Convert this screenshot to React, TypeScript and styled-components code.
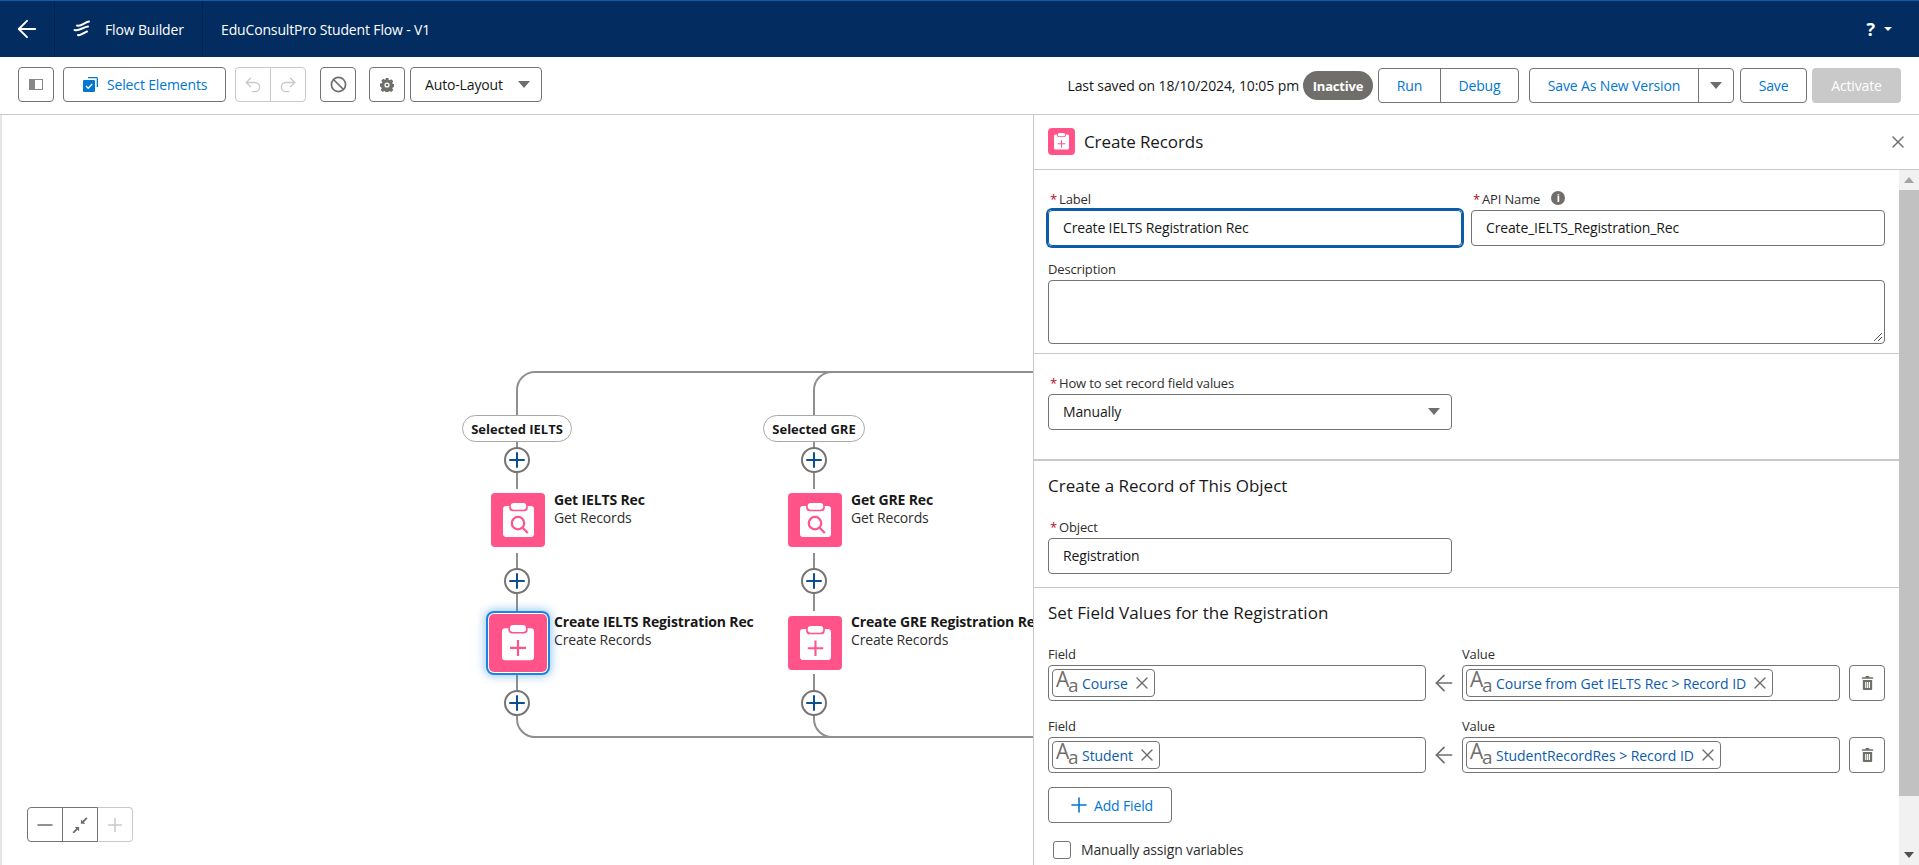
import React from "react";
import styled, { createGlobalStyle } from "styled-components";
import { ArrowLeft, Undo2, Redo2, Ban, X, Plus, Minus } from "lucide-react";

const GlobalStyle = createGlobalStyle`
  html, body { margin: 0; padding: 0; height: 100%; overflow: hidden; }
  body {
    font-family: "Open Sans", "Liberation Sans", sans-serif;
    font-size: 14px;
    letter-spacing: -0.15px;
    color: #181818;
    background: #fff;
  }
  * { box-sizing: border-box; }
`;

const BLUE = "#0b5cab";
const LINK = "#0176d3";
const BORDER = "#747474";
const PINK = "#ff538a";

const Page = styled.div`
  width: 1919px;
  height: 865px;
  display: flex;
  flex-direction: column;
  overflow: hidden;
`;

/* header */
const Header = styled.header`
  height: 57px;
  flex: none;
  display: flex;
  align-items: stretch;
  background: #032d60;
  border-top: 1px solid ${BLUE};
  color: #fff;
`;
const BackCell = styled.div`
  width: 55px;
  display: flex;
  align-items: center;
  justify-content: center;
  padding-right: 1px;
  border-right: 1px solid #02234b;
`;
const BrandCell = styled.div`
  width: 148px;
  display: flex;
  align-items: center;
  gap: 14px;
  padding-left: 18px;
  border-right: 1px solid #02234b;
`;
const FlowTitle = styled.div`
  display: flex;
  align-items: center;
  padding-left: 18px;
  flex: 1;
`;
const HelpArea = styled.div`
  display: flex;
  align-items: center;
  gap: 9px;
  padding-right: 27px;
  font-size: 18px;
  font-weight: 700;
`;
const HelpCaret = styled.span`
  width: 0;
  height: 0;
  border-left: 4px solid transparent;
  border-right: 4px solid transparent;
  border-top: 4px solid #fff;
`;

/* toolbar */
const Toolbar = styled.div`
  height: 58px;
  flex: none;
  display: flex;
  align-items: center;
  padding: 0 18px 2px;
  border-bottom: 1px solid #c9c9c9;
  background: #fff;
`;
const ActionGroup = styled.div`
  display: flex;
  align-items: center;
  margin-top: 2px;
`;
const IconButton = styled.div<{ $left?: number }>`
  width: 36px;
  height: 35px;
  margin-left: ${(p) => p.$left ?? 0}px;
  border: 1px solid ${BORDER};
  border-radius: 4px;
  display: flex;
  align-items: center;
  justify-content: center;
  color: #706e6b;
`;
const SelectButton = styled.div`
  width: 163px;
  height: 35px;
  margin: 0 0 1px 9px;
  padding-left: 19px;
  gap: 9px;
  border: 1px solid ${BORDER};
  border-radius: 4px;
  display: flex;
  align-items: center;
  color: ${LINK};
`;
const UndoGroup = styled.div`
  display: flex;
  width: 71px;
  height: 35px;
  margin-left: 9px;
  border: 1px solid #c9c9c9;
  border-radius: 4px;
  color: #c9c9c9;
`;
const UndoCell = styled.div`
  flex: 1;
  display: flex;
  align-items: center;
  justify-content: center;
  & + & { border-left: 1px solid #c9c9c9; }
`;
const LayoutSelect = styled.div`
  width: 132px;
  height: 35px;
  margin: 0 0 1px 5px;
  padding: 0 11px 0 14px;
  border: 1px solid ${BORDER};
  border-radius: 4px;
  display: flex;
  align-items: center;
  justify-content: space-between;
`;
const Caret = styled.span`
  width: 0;
  height: 0;
  border-left: 6px solid transparent;
  border-right: 6px solid transparent;
  border-top: 7px solid #706e6b;
`;
const Spacer = styled.div`
  flex: 1;
`;
const SavedText = styled.span`
  letter-spacing: -0.1px;
  margin-right: 4px;
`;
const StatusPill = styled.span`
  width: 70px;
  height: 29px;
  border-radius: 15px;
  background: #706e6b;
  color: #fff;
  font-size: 13px;
  font-weight: 700;
  letter-spacing: -0.2px;
  display: flex;
  align-items: center;
  justify-content: center;
`;
const ButtonGroup = styled.div<{ $left: number }>`
  display: flex;
  height: 35px;
  margin-left: ${(p) => p.$left}px;
  border: 1px solid ${BORDER};
  border-radius: 4px;
  color: ${LINK};
`;
const GroupCell = styled.div<{ $width: number }>`
  width: ${(p) => p.$width}px;
  display: flex;
  align-items: center;
  justify-content: center;
  & + & { border-left: 1px solid ${BORDER}; }
`;
const ActivateButton = styled.div`
  width: 89px;
  height: 35px;
  margin-left: 5px;
  border-radius: 4px;
  background: #c9c9c9;
  color: #fff;
  display: flex;
  align-items: center;
  justify-content: center;
`;

/* body */
const Body = styled.div`
  flex: 1;
  min-height: 0;
  display: flex;
`;
const Canvas = styled.main`
  position: relative;
  flex: 1;
  overflow: hidden;
  border-left: 2px solid #e5e5e5;
`;
const Wires = styled.svg`
  position: absolute;
  left: -2px;
  top: 0;
  width: 1034px;
  height: 750px;
`;
const BranchPill = styled.div<{ $x: number; $y: number; $w: number }>`
  position: absolute;
  left: ${(p) => p.$x}px;
  top: ${(p) => p.$y}px;
  width: ${(p) => p.$w}px;
  height: 27px;
  border: 1px solid #a8a8a8;
  border-radius: 14px;
  background: #fff;
  display: flex;
  align-items: center;
  justify-content: center;
  font-size: 13px;
  font-weight: 700;
  letter-spacing: 0;
`;
const AddCircle = styled.div<{ $x: number; $y: number }>`
  position: absolute;
  left: ${(p) => p.$x}px;
  top: ${(p) => p.$y}px;
  width: 26px;
  height: 26px;
  border: 2px solid #747474;
  border-radius: 50%;
  background: #fff;
  color: #0b4f8f;
  display: flex;
  align-items: center;
  justify-content: center;
  & > svg { flex: none; }
`;
const FlowNode = styled.div<{ $x: number; $y: number }>`
  position: absolute;
  left: ${(p) => p.$x}px;
  top: ${(p) => p.$y}px;
  display: flex;
  gap: 9px;
  white-space: nowrap;
`;
const NodeIcon = styled.div<{ $selected?: boolean }>`
  width: 54px;
  height: 54px;
  flex: none;
  border-radius: 4px;
  background: ${PINK};
  display: flex;
  align-items: center;
  justify-content: center;
  ${(p) =>
    p.$selected &&
    `width: 58px;
     height: 58px;
     margin: -2px;
     border-radius: 5px;
     box-shadow: 0 0 0 1px #fff, 0 0 0 3px #1b84e0, 0 0 8px 5px rgba(27,132,224,.4);`}
`;
const NodeText = styled.div<{ $top: number }>`
  margin-top: ${(p) => p.$top}px;
  line-height: 18px;
`;
const NodeTitle = styled.div`
  font-weight: 700;
`;
const NodeSub = styled.div`
  color: #2e2e2e;
`;
const ZoomControl = styled.div`
  position: absolute;
  left: 25px;
  bottom: 23px;
  display: flex;
  height: 35px;
`;
const ZoomCell = styled.div<{ $off?: boolean }>`
  width: 36px;
  display: flex;
  align-items: center;
  justify-content: center;
  border: 1px solid ${(p) => (p.$off ? "#c9c9c9" : BORDER)};
  color: ${(p) => (p.$off ? "#c9c9c9" : "#706e6b")};
  & + & { margin-left: -1px; border-left-color: ${BORDER}; }
  &:first-child { border-radius: 4px 0 0 4px; }
  &:last-child { border-radius: 0 4px 4px 0; }
`;

/* panel */
const Panel = styled.aside`
  width: 886px;
  flex: none;
  display: flex;
  flex-direction: column;
  border-left: 1px solid #c9c9c9;
  background: #fff;
`;
const PanelHead = styled.div`
  height: 55px;
  flex: none;
  padding: 0 11px 1px 14px;
  display: flex;
  align-items: center;
  gap: 9px;
  border-bottom: 1px solid #c9c9c9;
`;
const PanelIcon = styled.div`
  width: 27px;
  height: 27px;
  border-radius: 4px;
  background: ${PINK};
  display: flex;
  align-items: center;
  justify-content: center;
`;
const PanelTitle = styled.div`
  flex: 1;
  font-size: 17px;
  letter-spacing: -0.1px;
`;
const PanelScroll = styled.div`
  flex: 1;
  min-height: 0;
  display: flex;
`;
const PanelContent = styled.div`
  flex: 1;
  overflow: hidden;
  min-width: 0;
`;
const Section = styled.section<{ $h: number; $thick?: boolean }>`
  display: flow-root;
  height: ${(p) => p.$h}px;
  padding: 0 14px;
  border-bottom: ${(p) => (p.$thick ? 2 : 1)}px solid #c9c9c9;
  &:last-child { border-bottom: 0; }
`;
const Row = styled.div<{ $top?: number; $gap?: number }>`
  display: flex;
  margin-top: ${(p) => p.$top ?? 0}px;
  gap: ${(p) => p.$gap ?? 0}px;
`;
const Field = styled.div<{ $w?: number }>`
  width: ${(p) => (p.$w ? `${p.$w}px` : "auto")};
  flex: ${(p) => (p.$w ? "none" : 1)};
  min-width: 0;
`;
const Label = styled.div`
  height: 17px;
  padding-bottom: 2px;
  display: flex;
  align-items: center;
  font-size: 13px;
  color: #2e2e2e;
  margin-bottom: 2px;
`;
const Req = styled.span`
  color: #ba0517;
  margin: 0 2px;
`;
const InfoDot = styled.span`
  display: inline-flex;
  width: 14px;
  height: 14px;
  margin: -2px 0 0 11px;
  border-radius: 50%;
  background: #706e6b;
  color: #fff;
  font-size: 10px;
  font-weight: 700;
  align-items: center;
  justify-content: center;
`;
const Input = styled.div<{ $focus?: boolean }>`
  height: 36px;
  padding: 0 14px 2px;
  display: flex;
  align-items: center;
  border: 1px solid ${BORDER};
  border-radius: 4px;
  white-space: nowrap;
  ${(p) => p.$focus && `border-color: ${BLUE}; box-shadow: 0 0 0 2px ${BLUE};`}
`;
const TextArea = styled.div`
  position: relative;
  height: 64px;
  border: 1px solid ${BORDER};
  border-radius: 4px;
`;
const Grip = styled.svg`
  position: absolute;
  right: 1px;
  bottom: 1px;
`;
const SelectBox = styled(Input)`
  justify-content: space-between;
  padding-right: 11px;
`;
const SectionHeading = styled.h3`
  margin: 0;
  font-size: 17px;
  font-weight: 400;
  letter-spacing: 0;
  line-height: 22px;
`;
const PillInput = styled.div`
  height: 36px;
  padding: 3px;
  border: 1px solid ${BORDER};
  border-radius: 4px;
  display: flex;
  align-items: flex-start;
`;
const Tag = styled.div`
  height: 28px;
  padding: 0 2px 0 3px;
  display: flex;
  align-items: center;
  border: 1px solid ${BORDER};
  border-radius: 4px;
  color: ${BLUE};
  letter-spacing: -0.05px;
  white-space: nowrap;
`;
const TypeGlyph = styled.span`
  position: relative;
  display: inline-block;
  flex: none;
  width: 24px;
  height: 26px;
  color: #706e6b;
  line-height: 1;
  & > span { position: absolute; }
  & > span:first-child { left: 0; top: -1px; font-size: 21px; }
  & > span:last-child { left: 12px; top: 6px; font-size: 19px; }
`;
const TagText = styled.span`
  margin: 0 4px 0 2px;
`;
const ArrowCell = styled.div`
  width: 36px;
  flex: none;
  padding-top: 19px;
  display: flex;
  align-items: center;
  justify-content: center;
  color: #706e6b;
`;
const TrashButton = styled(IconButton)`
  flex: none;
  margin: 19px 0 0 9px;
  height: 36px;
`;
const AddField = styled.div`
  width: 124px;
  height: 36px;
  margin-top: 14px;
  border: 1px solid ${BORDER};
  border-radius: 4px;
  display: flex;
  align-items: center;
  justify-content: center;
  gap: 3px;
  color: ${LINK};
`;
const CheckRow = styled.div`
  display: flex;
  align-items: center;
  gap: 10px;
  margin: 17px 0 0 5px;
  color: #2e2e2e;
`;
const CheckBox = styled.span`
  width: 18px;
  height: 18px;
  border: 1px solid ${BORDER};
  border-radius: 3px;
`;
const ScrollBar = styled.div`
  width: 20px;
  flex: none;
  display: flex;
  flex-direction: column;
  align-items: center;
  background: #f1f1f1;
`;
const ScrollArrow = styled.span<{ $up?: boolean }>`
  flex: none;
  height: 20px;
  display: flex;
  align-items: center;
  &::after {
    content: "";
    border-left: 5px solid transparent;
    border-right: 5px solid transparent;
    ${(p) => (p.$up ? "border-bottom" : "border-top")}: 6px solid ${(p) => (p.$up ? "#a3a3a3" : "#505050")};
  }
`;
const ScrollThumb = styled.div`
  width: 100%;
  height: 606px;
  background: #c1c1c1;
  margin-bottom: 49px;
`;

const BrandIcon = () => (
  <svg width="18" height="18" viewBox="0 0 18 18" fill="none" stroke="#fff" strokeWidth="2" strokeLinecap="round">
    <path d="M4 5.5C8 7 11 2.5 16 1.5" />
    <path d="M1.5 10C6 11.5 10 7 15 6.5" />
    <path d="M5 15C8 16 11 12.5 14 11.5" />
  </svg>
);
const PanelToggleIcon = () => (
  <svg width="14" height="11" viewBox="0 0 14 11" fill="none">
    <rect x=".5" y=".5" width="13" height="10" stroke="#8a8886" />
    <rect x="1" y="1" width="5" height="9" fill="#8a8886" />
  </svg>
);
const SelectIcon = () => (
  <svg width="15" height="15" viewBox="0 0 15 15">
    <path d="M5 0h8.5A1.5 1.5 0 0 1 15 1.5V10h-1.3V1.3H5z" fill="#0176d3" />
    <rect x="0" y="3" width="12" height="12" rx="1.2" fill="#0176d3" />
    <path d="M3 9l2.2 2.2L9.2 7" stroke="#fff" strokeWidth="1.3" fill="none" />
  </svg>
);
const GearIcon = () => (
  <svg width="14" height="14" viewBox="0 0 14 14">
    <path
      fillRule="evenodd"
      fill="#706e6b"
      d="M5.6 0h2.8l.3 1.8 1.1.5 1.5-1 2 2-1 1.5.5 1.1 1.8.3v2.8l-1.8.3-.5 1.1 1 1.5-2 2-1.5-1-1.1.5-.3 1.8H5.6l-.3-1.8-1.1-.5-1.5 1-2-2 1-1.5-.5-1.1L0 8.4V5.6l1.8-.3.5-1.1-1-1.5 2-2 1.5 1 1.1-.5zM7 4.4a2.6 2.6 0 1 0 0 5.2 2.6 2.6 0 0 0 0-5.2z"
    />
    <circle cx="7" cy="7" r="1.3" fill="#706e6b" />
  </svg>
);
const ClipboardIcon = ({ size, kind }: { size: number; kind: "plus" | "search" }) => (
  <svg width={size} height={size * 1.1} viewBox="0 0 30 33">
    <path
      fill="#fff"
      d="M3 3h3v1.5A3.5 3.5 0 0 0 9.5 8h11A3.5 3.5 0 0 0 24 4.5V3h3a3 3 0 0 1 3 3v24a3 3 0 0 1-3 3H3a3 3 0 0 1-3-3V6a3 3 0 0 1 3-3z"
    />
    <rect x="7.5" y="0" width="15" height="6.5" rx="3" fill="#fff" />
    {kind === "plus" ? (
      <path d="M15 14v15M7.5 21.5h15" stroke={PINK} strokeWidth="2" />
    ) : (
      <g stroke={PINK} strokeWidth="2.2" fill="none">
        <circle cx="14.5" cy="19.5" r="6" />
        <path d="M19 24l5 5" />
      </g>
    )}
  </svg>
);
const TrashIcon = () => (
  <svg width="13" height="14" viewBox="0 0 13 15" fill="#706e6b">
    <path d="M4.5 0h4v1.4h4V3H.5V1.4h4zM1.5 4.2h10V14a1 1 0 0 1-1 1h-8a1 1 0 0 1-1-1zM4 6.3v6.5h1.2V6.3zm2 0v6.5h1.2V6.3zm2 0v6.5h1.2V6.3z" />
  </svg>
);
const FitIcon = () => (
  <svg width="16" height="16" viewBox="0 0 16 16" fill="#706e6b">
    <path d="M15.5 1.5L11.8 5.2l1.6 1.6H8.9V2.4l1.6 1.5L14.2.3zM.5 15.2l3.7-3.7-1.6-1.6h4.5v4.5l-1.6-1.6-3.7 3.7z" />
  </svg>
);

const columns = [
  { x: 515, pill: "Selected IELTS", pillW: 110, get: "Get IELTS Rec", create: "Create IELTS Registration Rec", selected: true },
  { x: 812, pill: "Selected GRE", pillW: 102, get: "Get GRE Rec", create: "Create GRE Registration Rec", selected: false },
];

const Aa = () => (
  <TypeGlyph>
    <span>A</span>
    <span>a</span>
  </TypeGlyph>
);

const fieldRows = [
  { field: "Course", value: "Course from Get IELTS Rec > Record ID" },
  { field: "Student", value: "StudentRecordRes > Record ID" },
];

export default function App() {
  return (
    <Page>
      <GlobalStyle />
      <Header>
        <BackCell>
          <ArrowLeft size={28} strokeWidth={1.7} />
        </BackCell>
        <BrandCell>
          <BrandIcon />
          Flow Builder
        </BrandCell>
        <FlowTitle>EduConsultPro Student Flow - V1</FlowTitle>
        <HelpArea>
          ?
          <HelpCaret />
        </HelpArea>
      </Header>

      <Toolbar>
        <IconButton>
          <PanelToggleIcon />
        </IconButton>
        <SelectButton>
          <SelectIcon />
          Select Elements
        </SelectButton>
        <UndoGroup>
          <UndoCell>
            <Undo2 size={20} strokeWidth={1.6} />
          </UndoCell>
          <UndoCell>
            <Redo2 size={20} strokeWidth={1.6} />
          </UndoCell>
        </UndoGroup>
        <IconButton $left={14}>
          <Ban size={17} strokeWidth={2.4} />
        </IconButton>
        <IconButton $left={13}>
          <GearIcon />
        </IconButton>
        <LayoutSelect>
          Auto-Layout
          <Caret />
        </LayoutSelect>
        <Spacer />
        <ActionGroup>
          <SavedText>Last saved on 18/10/2024, 10:05 pm</SavedText>
          <StatusPill>Inactive</StatusPill>
          <ButtonGroup $left={5}>
            <GroupCell $width={61}>Run</GroupCell>
            <GroupCell $width={78}>Debug</GroupCell>
          </ButtonGroup>
          <ButtonGroup $left={10}>
            <GroupCell $width={168}>Save As New Version</GroupCell>
            <GroupCell $width={35}>
              <Caret />
            </GroupCell>
          </ButtonGroup>
          <ButtonGroup $left={6}>
            <GroupCell $width={65}>Save</GroupCell>
          </ButtonGroup>
          <ActivateButton>Activate</ActivateButton>
        </ActionGroup>
      </Toolbar>

      <Body>
        <Canvas>
          <Wires viewBox="0 0 1034 750" fill="none" stroke="#8f8f8f" strokeWidth="2">
            {columns.map((c) => {
              const x = c.x + 2;
              return (
                <g key={c.x}>
                  <path d={`M${x} 301V275a18 18 0 0 1 18-18H1034`} />
                  <path d={`M${x} 327V374`} />
                  <path d={`M${x} 438V496`} />
                  <path d={`M${x} 559V604a18 18 0 0 0 18 18H1034`} />
                </g>
              );
            })}
          </Wires>
          {columns.map((c) => (
            <React.Fragment key={c.pill}>
              <BranchPill $x={c.x - c.pillW / 2} $y={300} $w={c.pillW}>
                {c.pill}
              </BranchPill>
              {[332, 453, 575].map((y) => (
                <AddCircle key={y} $x={c.x - 13} $y={y}>
                  <Plus size={24} strokeWidth={2} />
                </AddCircle>
              ))}
              <FlowNode $x={c.x - 26} $y={378}>
                <NodeIcon>
                  <ClipboardIcon size={31} kind="search" />
                </NodeIcon>
                <NodeText $top={-2}>
                  <NodeTitle>{c.get}</NodeTitle>
                  <NodeSub>Get Records</NodeSub>
                </NodeText>
              </FlowNode>
              <FlowNode $x={c.x - 26} $y={501}>
                <NodeIcon $selected={c.selected}>
                  <ClipboardIcon size={c.selected ? 32 : 31} kind="plus" />
                </NodeIcon>
                <NodeText $top={-3}>
                  <NodeTitle>{c.create}</NodeTitle>
                  <NodeSub>Create Records</NodeSub>
                </NodeText>
              </FlowNode>
            </React.Fragment>
          ))}
          <ZoomControl>
            <ZoomCell>
              <Minus size={24} strokeWidth={1.6} />
            </ZoomCell>
            <ZoomCell>
              <FitIcon />
            </ZoomCell>
            <ZoomCell $off>
              <Plus size={22} strokeWidth={1.6} />
            </ZoomCell>
          </ZoomControl>
        </Canvas>

        <Panel>
          <PanelHead>
            <PanelIcon>
              <ClipboardIcon size={15} kind="plus" />
            </PanelIcon>
            <PanelTitle>Create Records</PanelTitle>
            <X size={20} strokeWidth={1.7} color="#706e6b" />
          </PanelHead>
          <PanelScroll>
            <PanelContent>
              <Section $h={184}>
                <Row $top={21} $gap={9}>
                  <Field $w={414}>
                    <Label>
                      <Req>*</Req>Label
                    </Label>
                    <Input $focus>Create IELTS Registration Rec</Input>
                  </Field>
                  <Field>
                    <Label>
                      <Req>*</Req>API Name<InfoDot>i</InfoDot>
                    </Label>
                    <Input>Create_IELTS_Registration_Rec</Input>
                  </Field>
                </Row>
                <Row $top={15}>
                  <Field>
                    <Label>Description</Label>
                    <TextArea>
                      <Grip width="10" height="10" viewBox="0 0 10 10" stroke="#505050" strokeWidth="1">
                        <path d="M9 1L1 9M9 5L5 9" />
                      </Grip>
                    </TextArea>
                  </Field>
                </Row>
              </Section>
              <Section $h={107} $thick>
                <Row $top={21}>
                  <Field $w={404}>
                    <Label>
                      <Req>*</Req>How to set record field values
                    </Label>
                    <SelectBox>
                      Manually
                      <Caret />
                    </SelectBox>
                  </Field>
                </Row>
              </Section>
              <Section $h={127}>
                <Row $top={14}>
                  <SectionHeading>Create a Record of This Object</SectionHeading>
                </Row>
                <Row $top={22}>
                  <Field $w={404}>
                    <Label>
                      <Req>*</Req>Object
                    </Label>
                    <Input>Registration</Input>
                  </Field>
                </Row>
              </Section>
              <Section $h={278}>
                <Row $top={14}>
                  <SectionHeading>Set Field Values for the Registration</SectionHeading>
                </Row>
                {fieldRows.map((r, i) => (
                  <Row key={r.field} $top={i === 0 ? 22 : 17}>
                    <Field $w={378}>
                      <Label>Field</Label>
                      <PillInput>
                        <Tag>
                          <Aa />
                          <TagText>{r.field}</TagText>
                          <X size={20} strokeWidth={1.6} color="#706e6b" />
                        </Tag>
                      </PillInput>
                    </Field>
                    <ArrowCell>
                      <ArrowLeft size={26} strokeWidth={1.6} />
                    </ArrowCell>
                    <Field>
                      <Label>Value</Label>
                      <PillInput>
                        <Tag>
                          <Aa />
                          <TagText>{r.value}</TagText>
                          <X size={20} strokeWidth={1.6} color="#706e6b" />
                        </Tag>
                      </PillInput>
                    </Field>
                    <TrashButton>
                      <TrashIcon />
                    </TrashButton>
                  </Row>
                ))}
                <AddField>
                  <Plus size={24} strokeWidth={1.6} />
                  Add Field
                </AddField>
                <CheckRow>
                  <CheckBox />
                  Manually assign variables
                </CheckRow>
              </Section>
            </PanelContent>
            <ScrollBar>
              <ScrollArrow $up />
              <ScrollThumb />
              <ScrollArrow />
            </ScrollBar>
          </PanelScroll>
        </Panel>
      </Body>
    </Page>
  );
}
